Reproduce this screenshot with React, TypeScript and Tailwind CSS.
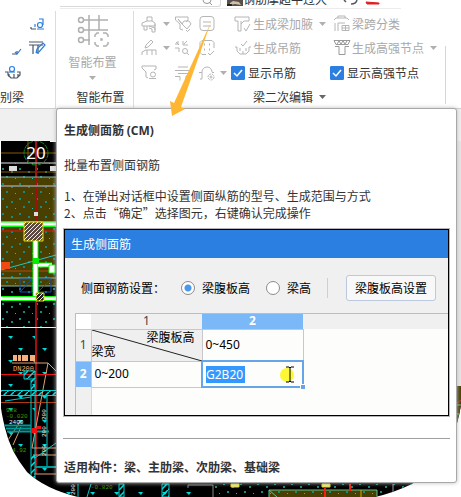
import { useState, type ReactNode } from 'react';

/** Toolbar glyph keys */
type IconName =
  | 'stamp'
  | 'funnelCheck'
  | 'note'
  | 'pencil'
  | 'collapse'
  | 'dots'
  | 'funnelSearch'
  | 'table'
  | 'hook'
  | 'haunch'
  | 'hanger'
  | 'span'
  | 'node';

const ICONS: Record<IconName, ReactNode> = {
  stamp: (
    <path d="M1 8L6 6V2h5v4l3 2v3H1zM6 6h5M3 11v4h3v-4M8 11l6 2v4h-3v-3l-3-1M14 9v6" />
  ),
  funnelCheck: (
    <path d="M9 15l-3-1V9L1.500 5V2H14v3l-2 2M4 4l4 5 2-3h5l2 3-4 5-4-4zM12 15l1.500 1.500L16 14" />
  ),
  note: (
    <>
      <rect x="2" y="1.500" width="14" height="14" rx="3" />
      <path d="M5 7h8M5 11h8" />
    </>
  ),
  pencil: <path d="M4 9l1-3 5-5 2 2-5 5-3 1M1 16v-3l4-2h10v5M6 11v5M11 11v5" />,
  collapse: (
    <>
      <path d="M1 5h3V2M9 2v4h5M1 9h4v4M2 3l3 3M13 2l-3 3" />
      <circle cx="11" cy="12" r="2.500" />
      <path d="M13 14l2 2" />
    </>
  ),
  dots: (
    <>
      <path d="M8 15.500H4l-2-2V3.500l2-2h10l2 2V9" />
      <path d="M6 5.500h1M11 5.500h1M6 10.500h1M11 10.500h1" strokeWidth="2" />
      <path d="M10 14l2 2 4-4" />
    </>
  ),
  funnelSearch: (
    <>
      <path d="M7 14L5 13V8L1 4V2h14v3l-2 1" />
      <circle cx="12" cy="10.500" r="2.500" />
      <path d="M8 14.500h7" />
    </>
  ),
  table: <path d="M4 3h10M1 6.500h15M4 9.500h10M1 12.500h5v4M12 16v-4h4" />,
  hook: (
    <>
      <path d="M4 15V8a5 5 0 0 1 10 0M1 8.500h3M14 8.500h2M2 15h2" />
      <circle cx="13" cy="13" r="3" strokeDasharray="2 1" />
      <circle cx="13" cy="13" r="1" />
    </>
  ),
  haunch: <path d="M1 2h14v4h-5L7 9M1 2v4h3v10h3V6M10 13l2 3 4-7" />,
  hanger: <path d="M1 8h2v4l3 3h6l3-3V8h2M6 12V9M12 12V9M7 5l2 2 4-5M9 12v3" />,
  span: (
    <path d="M1 5l2-2h11l2 2M5 3V1h7v2M2 8v8M5 16V8h7M9 10.500h7v5H9zM9 13h7M12.500 10.500v5" />
  ),
  node: (
    <path
      d="M1 1.500h16M1 1.500l2 4h12l2-4M4 5l2-3 2 3 2-3 2 3 2-3M2 7.500h4v8h6v-8h4"
      stroke="#999"
    />
  ),
};

function Icon({ name }: { name: IconName }) {
  return (
    <svg
      className="h-[18px] w-[18px] shrink-0"
      viewBox="0 0 18 18"
      fill="none"
      stroke="#b5b5b5"
      strokeWidth="1"
      strokeLinejoin="round"
    >
      {ICONS[name]}
    </svg>
  );
}

function Caret({ dark = false }: { dark?: boolean }) {
  return (
    <svg className="h-[4px] w-[7px] shrink-0" viewBox="0 0 7 4">
      <path d="M0 0h7L3.500 4z" fill={dark ? '#666' : '#b0b0b0'} />
    </svg>
  );
}

/** Small icon button, with an optional menu arrow */
function IconButton({ name, label, menu = false }: { name: IconName; label: string; menu?: boolean }) {
  return (
    <button type="button" aria-label={label} className="flex items-center gap-1">
      <Icon name={name} />
      {menu && <Caret />}
    </button>
  );
}

/** Icon with a text label */
function ToolButton({ name, label, menu = false }: { name: IconName; label: string; menu?: boolean }) {
  return (
    <button type="button" className="flex items-center gap-px pl-[3px] text-[#a9a9a9]">
      <Icon name={name} />
      <span>{label}</span>
      {menu && (
        <span className="pl-[5px]">
          <Caret />
        </span>
      )}
    </button>
  );
}

function Check({ label }: { label: string }) {
  const [on, setOn] = useState(true);
  return (
    <label className="flex items-center gap-[3px]">
      <span className="relative flex">
        <input
          type="checkbox"
          checked={on}
          onChange={() => setOn(!on)}
          className="h-[14px] w-[14px] appearance-none rounded-[1px] border border-[#2b7fe0] checked:bg-[#2b7fe0]"
        />
        {on && (
          <svg className="pointer-events-none absolute inset-0" viewBox="0 0 14 14" fill="none">
            <path d="M3 7l3 3 5-6" stroke="#fff" strokeWidth="1.500" />
          </svg>
        )}
      </span>
      {label}
    </label>
  );
}

/** Strip above the ribbon: search box and document title */
function TopStrip() {
  return (
    <div className="flex h-[11px] items-start overflow-hidden pl-[60px]">
      <div className="flex h-[9px] w-[341px] items-start border-b border-[#ececec]">
        <div className="flex h-[7px] w-[161px] justify-end overflow-hidden rounded-br-[3px] border-r border-b border-[#d9d9d9] pr-[7px]">
          <svg className="h-[6px] w-[11px]" viewBox="0 0 11 6" fill="none" stroke="#999">
            <path d="M1 0a4 3.500 0 0 0 8 0M7 2l3 3" />
          </svg>
        </div>
        <svg className="ml-[6px] h-[6px] w-[16px]" viewBox="0 0 16 6">
          <path d="M0 0h16v6H0z" fill="#57504c" />
          <path d="M3 3l3-2 6 1 2 3-6-1-5 1z" fill="#d6bda4" />
          <path d="M0 4h5v2H0z" fill="#222" />
        </svg>
        <div className="flex h-[5px] w-[86px] items-end overflow-hidden whitespace-nowrap">
          <span className="leading-[13px]">钢筋摩超半过大</span>
        </div>
        <svg className="ml-[14px] h-[6px] w-[42px]" viewBox="0 0 42 6" fill="none">
          <path d="M1 0l2 2M8 4q5 0 6-4" stroke="#556" strokeWidth="1.500" />
          <path d="M23 2l13 1v1H24z" fill="#e02020" stroke="#e02020" />
        </svg>
      </div>
    </div>
  );
}

function Ribbon() {
  return (
    <div className="bg-white">
      <TopStrip />
      <div className="flex h-[97px] items-stretch whitespace-nowrap">
        <section className="flex w-[56px] shrink-0 flex-col border-r border-[#dcdcdc]">
          <svg
            className="h-[76px] w-[55px]"
            viewBox="0 0 55 76"
            fill="none"
            stroke="#4a5568"
            strokeWidth="1.200"
          >
            <path d="M31 18h5M31 18v-2M12 43h5M17 43v-3M29 31h14M29 34h14M33 34v9M38 34v9M5 61h3v3l3 3h6l3-3v-3h-3M9 63v3M14 63v4M18 63v3" />
            <path
              d="M35 13v3M37 18h7M43 14V8h-4M15 41l2 2 4-5M36 42l1-4 6-6 2 2-6 7-3 1"
              stroke="#2b7fe0"
            />
            <circle cx="40" cy="14" r="2.500" stroke="#2b7fe0" />
            <circle cx="12" cy="58" r="2.500" stroke="#2b7fe0" />
            <path d="M9 61h6" stroke="#2b7fe0" />
          </svg>
          <h2 className="leading-[20px]">别梁</h2>
        </section>

        <section className="flex w-[78px] shrink-0 flex-col items-center border-r border-[#dcdcdc]">
          <button type="button" className="flex h-[76px] w-full flex-col items-center pt-1 pr-1 text-[#a9a9a9]">
            <svg className="h-[32px] w-[32px]" viewBox="0 0 32 32" fill="none" stroke="#b0b0b0" strokeWidth="1.500">
              <path d="M6 5h25M6 15h25M6 25h7M12 0v30M22 0v15" />
              <circle cx="4" cy="5" r="2.500" />
              <circle cx="4" cy="15" r="2.500" />
              <circle cx="4" cy="25" r="2.500" />
              <path d="M18 22v-2l2-2h2M26 18h3l2 2v2M31 27v2l-2 2h-3M22 31h-2l-2-2v-2" />
              <path d="M24 24h1v1h-1z" />
            </svg>
            <span className="pt-[6px] leading-[18px]">智能布置</span>
            <span className="flex pt-[5px]">
              <Caret />
            </span>
          </button>
          <h2 className="pl-3 leading-[20px]">智能布置</h2>
        </section>

        <section className="flex w-[311px] shrink-0 flex-col">
          <div className="flex h-[76px] pl-[7px]">
            <div className="grid w-[90px] grid-cols-[33px_24px_33px] grid-rows-[25px_24px_25px] items-center">
              <IconButton name="stamp" label="原位标注" menu />
              <IconButton name="funnelCheck" label="筛选" />
              <IconButton name="note" label="生成侧面筋" />
              <IconButton name="pencil" label="编辑支座" menu />
              <IconButton name="collapse" label="查找" />
              <IconButton name="dots" label="批量选择" />
              <IconButton name="funnelSearch" label="过滤" />
              <IconButton name="table" label="应用同名梁" />
              <IconButton name="hook" label="吊筋设置" menu />
            </div>
            <div className="grid w-[99px] grid-rows-[25px_24px_25px] items-center justify-start">
              <ToolButton name="haunch" label="生成梁加腋" menu />
              <ToolButton name="hanger" label="生成吊筋" />
              <Check label="显示吊筋" />
            </div>
            <div className="grid grid-rows-[25px_24px_25px] items-center justify-start">
              <ToolButton name="span" label="梁跨分类" />
              <ToolButton name="node" label="生成高强节点" menu />
              <Check label="显示高强节点" />
            </div>
          </div>
          <button type="button" className="flex items-center justify-center gap-[6px] leading-[20px]">
            梁二次编辑
            <Caret dark />
          </button>
        </section>
        <div className="mt-[35px] mb-[4px] w-px bg-[#d5d5d5]" />
      </div>
    </div>
  );
}

/** Drawing canvas, with its lower corners rounded off */
function Canvas() {
  return (
    <svg className="block w-full" viewBox="0 141 461 356">
      <defs>
        <pattern id="dots" width="17" height="15" patternUnits="userSpaceOnUse">
          <path d="M2 3h2v2H2zM11 6h2v2h-2zM6 11h2v2H6z" fill="#168a80" />
          <path d="M15 13h1v1h-1z" fill="#20c0b0" />
        </pattern>
        <pattern id="hatch" width="4" height="4" patternUnits="userSpaceOnUse">
          <path d="M0 4L4 0" stroke="#eee" strokeWidth="1" />
        </pattern>
        <pattern id="cyan" width="7" height="7" patternUnits="userSpaceOnUse">
          <path d="M0 7L7 0" stroke="#00e0e0" strokeWidth="1.500" />
        </pattern>
        <pattern id="ticks" width="24" height="24" patternUnits="userSpaceOnUse">
          <path d="M18 12h5l-2 3zM8 0h5l-2 3z" fill="#00d8d8" />
        </pattern>
        <clipPath id="edge">
          <path d="M0 141H461V405Q458 424 451 440Q438 467 412 484Q393 493 375 497H78Q45 489 27 472Q10 451 5 428Q1 412 0 400z" />
        </clipPath>
      </defs>
      <g clipPath="url(#edge)">
        <path d="M1 141h460v356H1z" fill="#000" />
        <path d="M56 141h405v245H56z" fill="#e6e6e6" />
        <path d="M1 177h55v109H1z" fill="#493f00" />
        <path d="M1 163h55v164H1z" fill="url(#dots)" />
        <path d="M1 329h55v168H1zM56 484h154v13H56z" fill="url(#ticks)" />
        <path d="M1 153h55M1 172h55M28 141v22" stroke="#8a5a00" />
        <path d="M36 141v333" stroke="#a01010" strokeWidth="2" />
        <path d="M1 163h55M1 186h55" stroke="#999" strokeWidth="1.500" />
        <path d="M1 177h55M1 278h55M1 286h55" stroke="#86b9a0" />
        <path d="M9 166h8v5H9zM50 166h6v5h-6z" fill="#ddd" />
        <circle cx="36" cy="153" r="12" stroke="#0a8a20" fill="none" strokeDasharray="5 1" />
        <text x="36" y="159" textAnchor="middle" fill="#fff" fontSize="17" fontFamily="Noto Sans">
          20
        </text>
        <path d="M34 212h4v4h-4z" fill="#ddd" />
        <path d="M1 224h55" stroke="#0f0" strokeWidth="6" />
        <path d="M1 224h55" stroke="#fff" strokeWidth="3" />
        <path d="M1 231h55" stroke="#f01010" />
        <path d="M24 222h19v19H24z" fill="#5b4b42" stroke="#e6e000" />
        <path d="M24 222h19v19H24z" fill="url(#hatch)" />
        <path d="M1 270L56 255" stroke="#25c4c4" />
        <path d="M1 271h55" stroke="#b74a10" />
        <path d="M1 262h9v7H1z" fill="#ee4a12" />
        <path d="M20 279h12v13H20zM38 279h13v13H38zM20 292l12-13M38 292l13-13" stroke="#1255b0" fill="none" />
        <path d="M35.500 241v55" stroke="#0f0" strokeWidth="6" />
        <path d="M35.500 241v55" stroke="#fff" strokeWidth="4" />
        <path d="M38 265h14" stroke="#0f0" strokeWidth="5" />
        <path d="M38 265h14" stroke="#fff" strokeWidth="3" />
        <path d="M49 265h6v8h-6z" fill="#fff" stroke="#0f0" />
        <path d="M33 258h6v6h-6z" fill="#00f000" />
        <path d="M1 298.500h55" stroke="#0f0" strokeWidth="5" />
        <path d="M1 298.500h55" stroke="#fff" strokeWidth="3" />
        <path d="M36 293h8v8h-8z" fill="#222" stroke="#e6e000" />
        <path d="M36 293h8v8h-8z" fill="url(#hatch)" />
        <path d="M1 327.500h55" stroke="#eee" />
        <g fontFamily="Liberation Mono" fill="#f0b080">
          <text x="13" y="371" fontSize="7">DN200</text>
          <path d="M13 355h4v6h-4zM18 355h3v6h-3zM22 355h6v6h-6zM30 355h5v6h-5z" />
        </g>
        <path d="M12 363h36l8 8M48 363L32 448M32 448h24M33 455h23M34 474h22M8 440l12-18M13 445l8-18" stroke="#e0a070" fill="none" />
        <path d="M1 374.500h55" stroke="#f01010" />
        <path d="M1 402.500h55" stroke="#b03a10" />
        <path d="M24 371h11v8H24z" stroke="#0dd" fill="url(#cyan)" />
        <path d="M1 391h55v4H1z" fill="url(#cyan)" />
        <path d="M1 390.500h55M1 395.500h55M31 380v100M35 380v100M47 396v72M5 401l26-4M35 458l21-15" stroke="#0cc" fill="none" />
        <path d="M31 379h4v12h-4zM31 455h4v30h-4z" fill="url(#cyan)" />
        <path d="M4 425.500h27M6 428.500h25M7 431.500h42M35 467h21" stroke="#099" strokeWidth="2" />
        <path d="M31 428h6v5h-6zM37 426h4v3h-4z" fill="#f01010" />
        <g fontFamily="Liberation Mono" fontSize="6">
          <text x="6" y="412" fill="#3a9a00">988</text>
          <text x="6" y="418" fill="#3a9a00">-0.020</text>
          <text x="9" y="424" fill="#eee">2400</text>
          <text x="12" y="452" fill="#3a9a00">4.92</text>
          <text x="91" y="489" fill="#3a9a00">-0.820</text>
        </g>
        <g fontFamily="Liberation Mono" fontSize="6" fill="#eee">
          <text transform="translate(46 420) rotate(-90)">200</text>
          <text transform="translate(46 437) rotate(-90)">200</text>
          <text transform="translate(46 456) rotate(-90)">200</text>
          <text transform="translate(75 495) rotate(-90)">200</text>
        </g>
        <path d="M87 497l4-13M78 484v13" stroke="#0cc" />
        <path d="M119 484h5v13h-5zM162 484h7v13h-7z" fill="url(#cyan)" stroke="#0cc" />
        <path d="M188 488v-3h25v12" stroke="#888" fill="none" />
        <path d="M214 484h206v13H214z" fill="url(#dots)" />
        <path d="M269 490h108v7H269z" fill="#493f00" />
        <path d="M269 490h108v7H269z" fill="url(#dots)" />
        <path d="M269 497v-7h108v7M269 490l8 7" stroke="#5fc494" fill="none" />
        <path d="M231 484h8v3h-8zM322 484h8v3h-8z" fill="#ddd" stroke="#e6e000" />
        <path d="M350 484v7M325 487v10" stroke="#f02010" strokeWidth="2" />
        <path d="M361 490v7" stroke="#d0b000" />
        <path d="M393 484v13" stroke="#9a9ac0" />
        <path d="M450 386h11v60h-11z" fill="#493f00" />
        <path d="M456 405h5M456 414h5" stroke="#5fc494" />
        <path d="M456 404l5-4" stroke="#d03020" />
      </g>
      <path d="M50 141h6v1h-6z" fill="#fff" />
    </svg>
  );
}

function SizeTable() {
  return (
    <table className="w-full table-fixed border-collapse bg-[#fdfdfc] font-['Noto_Sans','Noto_Sans_CJK_SC',sans-serif] text-[12px] leading-[14px]">
      <colgroup>
        <col className="w-[15px]" />
        <col className="w-[111px]" />
        <col className="w-[101px]" />
        <col />
      </colgroup>
      <thead>
        <tr className="h-[15px] bg-[#f0f0f0]">
          <td className="bg-white" />
          <th scope="col" className="p-0 font-normal text-[#444]">1</th>
          <th scope="col" className="bg-[#7ab8f8] p-0 font-bold text-white">2</th>
          <td />
        </tr>
      </thead>
      <tbody>
        <tr className="h-[32px]">
          <th scope="row" className="border border-l-0 border-[#c8c8c8] bg-[#f0f0f0] p-0 font-normal text-[#444]">
            1
          </th>
          <td className="relative border border-[#c8c8c8] bg-[#efefef] p-0">
            <svg className="absolute inset-0 h-full w-full" viewBox="0 0 110 31" preserveAspectRatio="none">
              <path d="M0 0L110 31" stroke="#222" />
            </svg>
            <div className="relative flex flex-col">
              <span className="self-end pr-[7px]">梁腹板高</span>
              <span>梁宽</span>
            </div>
          </td>
          <td className="border border-[#c8c8c8] py-0 pr-0 pl-[3px]">0~450</td>
          <td />
        </tr>
        <tr className="h-[26px]">
          <th scope="row" className="bg-[#7ab8f8] p-0 font-bold text-white">2</th>
          <td className="border border-[#c8c8c8] py-0 pr-0 pl-[3px]">0~200</td>
          <td className="relative border-2 border-[#66a6e8] py-0 pr-0 pl-[3px]">
            <input
              aria-label="梁腹板高 2"
              defaultValue="G2B20"
              className="block h-[17px] w-[39px] bg-[#3399ff] p-0 text-white outline-none"
            />
            <svg className="absolute top-[3px] right-[6px] h-[18px] w-[16px]" viewBox="0 0 16 18">
              <circle cx="7" cy="10" r="7" fill="#fdf735" />
              <path d="M6 2h3l1 1 1-1h3M10 3v14M6 17h3l1-1 1 1h3" stroke="#000" fill="none" />
            </svg>
            <span className="absolute -right-[3px] -bottom-[3px] h-[5px] w-[5px] border-t border-l border-white bg-[#66a6e8]" />
          </td>
          <td />
        </tr>
        <tr className="h-[28px]">
          <td className="border-r border-[#d8d8d8] bg-[#f0f0f0]" />
          <td colSpan={3} />
        </tr>
      </tbody>
    </table>
  );
}

function SideBarDialog() {
  const [mode, setMode] = useState('web');
  const modes = [
    { id: 'web', label: '梁腹板高' },
    { id: 'beam', label: '梁高' },
  ];

  return (
    <div className="border border-[#b5b5b5] text-black">
      <div className="border border-black bg-[#f0f0f0]">
        <h3 className="bg-[#2b7fe0] pl-[6px] leading-[28px] text-white">生成侧面筋</h3>
        <div className="flex h-[55px] items-center pt-[4px] pr-[12px] pl-[16px]">
          <span className="w-[100px]">侧面钢筋设置：</span>
          <div className="flex gap-[16px]">
            {modes.map(item => (
              <label key={item.id} className="flex items-center gap-[7px]">
                <input
                  type="radio"
                  name="mode"
                  checked={mode === item.id}
                  onChange={() => setMode(item.id)}
                  className="h-[14px] w-[14px] appearance-none rounded-full border border-[#8a8a8a] bg-white checked:bg-[radial-gradient(circle,#4a98e8_3px,#fff_4px)]"
                />
                {item.label}
              </label>
            ))}
          </div>
          <div className="ml-auto h-[20px] w-px bg-[#cfcfcf]" />
          <button
            type="button"
            className="ml-[18px] h-[26px] rounded-[3px] border border-[#bcc8dc] bg-[#f8f8f8] px-2"
          >
            梁腹板高设置
          </button>
        </div>
        <div className="ml-[10px] border-t border-l border-[#b9bec6]">
          <SizeTable />
        </div>
      </div>
    </div>
  );
}

/** Rich tooltip shown under the toolbar */
function CommandTip() {
  return (
    <div
      role="tooltip"
      className="absolute top-[108px] right-[4px] left-[56px] rounded-[3px] border border-[#a8a8a8] bg-white px-[6px] pt-[12px] pb-[7px] leading-[17px] text-[#333] shadow-[0_0_4px_#bbb]"
    >
      <h2 className="pl-px font-bold">
        生成侧面筋 <span className="font-['Noto_Sans',sans-serif]">(CM)</span>
      </h2>
      <p className="pt-[17px] pl-px">批量布置侧面钢筋</p>
      <ol className="pt-[14px] pb-[7px] pl-px">
        <li>1、在弹出对话框中设置侧面纵筋的型号、生成范围与方式</li>
        <li>2、点击“确定”选择图元，右键确认完成操作</li>
      </ol>
      <SideBarDialog />
      <hr className="mt-[21px] mb-[19px] border-[#a0a0a0]" />
      <p className="pl-px font-bold">适用构件：梁、主肋梁、次肋梁、基础梁</p>
    </div>
  );
}

export default function App() {
  return (
    <div
      lang="zh-CN"
      className="relative overflow-hidden bg-white font-['Noto_Sans_CJK_SC',sans-serif] text-[12px] leading-[18px] text-[#333]"
    >
      <Ribbon />
      <div className="h-[33px] border-t border-[#d0d0d0] bg-[#f0f0f0]" />
      <Canvas />
      <CommandTip />
      <svg className="pointer-events-none absolute top-[22px] left-[168px] h-[94px] w-[46px]" viewBox="0 0 46 94">
        <path d="M43 0L13 85L17 87L4 94L2 79L6 81z" fill="#ffb733" />
      </svg>
    </div>
  );
}
